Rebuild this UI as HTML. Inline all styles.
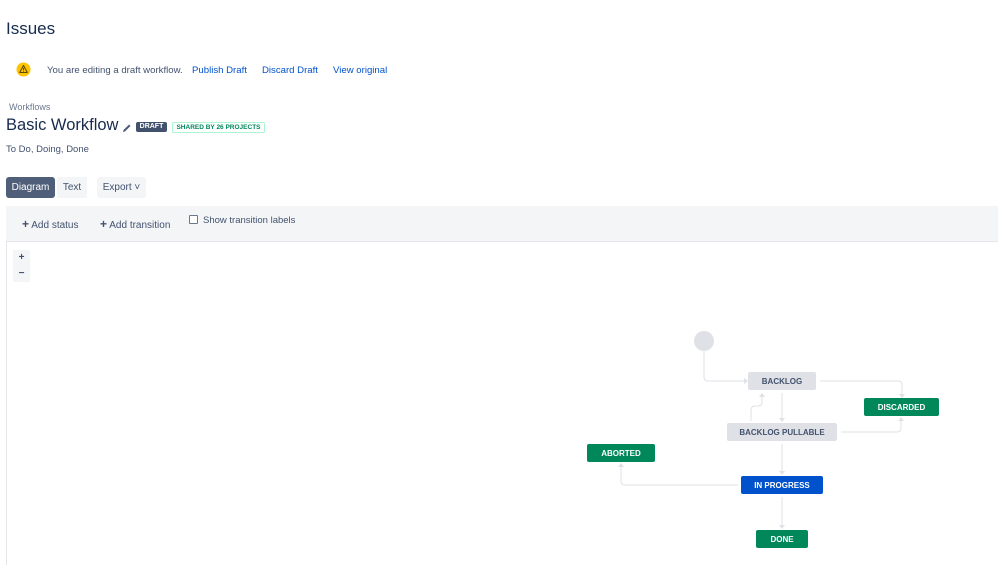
<!DOCTYPE html>
<html><head><meta charset="utf-8"><style>
*{margin:0;padding:0;box-sizing:border-box}
body{width:998px;height:565px;overflow:hidden;background:#fff;font-family:"Liberation Sans",Arial,sans-serif;color:#172b4d;position:relative}
.a{position:absolute;white-space:nowrap}
.lnk{color:#0052cc;font-size:9.6px}
.st{position:absolute;display:flex;align-items:center;justify-content:center;font-size:8px;font-weight:bold;border-radius:2px}
.g{background:#00875a;color:#fff}
.l{background:#dfe1e6;color:#42526e}
</style></head><body>
<div class="a" style="left:6px;top:19px;font-size:17px;color:#172b4d">Issues</div>
<svg class="a" style="left:16px;top:62px" width="15" height="15" viewBox="0 0 15 15"><circle cx="7.5" cy="7.5" r="7" fill="#ffc400"/><path d="M7.5 3.5 L11.3 10.5 H3.7 Z" fill="none" stroke="#5e4a00" stroke-width="1.1" stroke-linejoin="round"/><path d="M7.5 6v2.4" stroke="#5e4a00" stroke-width="1"/><circle cx="7.5" cy="9.4" r=".5" fill="#5e4a00"/></svg>
<div class="a" style="left:47px;top:65px;font-size:9.6px;color:#42526e">You are editing a draft workflow.</div>
<div class="a lnk" style="left:192px;top:65px">Publish Draft</div>
<div class="a lnk" style="left:262px;top:65px">Discard Draft</div>
<div class="a lnk" style="left:333px;top:65px">View original</div>
<div class="a" style="left:9px;top:102px;font-size:9px;color:#6b778c">Workflows</div>
<div class="a" style="left:6px;top:116px;font-size:16.5px;color:#172b4d">Basic Workflow</div>
<svg class="a" style="left:122px;top:123px" width="10" height="10" viewBox="0 0 10 10"><path d="M1 9 L1.5 7 L7 1.5 L8.5 3 L3 8.5 Z" fill="#505f79"/></svg>
<div class="a" style="left:136px;top:122px;width:31px;height:10px;background:#42526e;color:#fff;font-size:7px;font-weight:bold;border-radius:2px;line-height:10px;text-align:center">DRAFT</div>
<div class="a" style="left:172px;top:122px;width:93px;height:11px;border:1px solid #abf5d1;color:#00875a;font-size:6.5px;font-weight:bold;border-radius:2px;line-height:9px;text-align:center">SHARED BY 26 PROJECTS</div>
<div class="a" style="left:6px;top:144px;font-size:9.5px;color:#42526e">To Do, Doing, Done</div>
<div class="a" style="left:6px;top:177px;width:49px;height:21px;background:#505f79;color:#fff;font-size:10px;border-radius:3px;display:flex;align-items:center;justify-content:center">Diagram</div>
<div class="a" style="left:57px;top:177px;width:30px;height:21px;background:#f4f5f7;color:#42526e;font-size:10px;display:flex;align-items:center;justify-content:center">Text</div>
<div class="a" style="left:97px;top:177px;width:49px;height:21px;background:#f4f5f7;color:#42526e;font-size:10px;border-radius:3px;display:flex;align-items:center;justify-content:center">Export ˅</div>
<div class="a" style="left:6px;top:206px;width:992px;height:36px;background:#f4f5f7;border-bottom:1px solid #e4e6ea"></div>
<div class="a" style="left:6px;top:242px;width:1px;height:323px;background:#e4e6ea"></div>
<div class="a" style="left:22px;top:217px;font-size:10px;color:#42526e"><b style="color:#42526e;font-size:12px">+</b> Add status</div>
<div class="a" style="left:100px;top:217px;font-size:10px;color:#42526e"><b style="font-size:12px">+</b> Add transition</div>
<div class="a" style="left:189px;top:215px;width:9px;height:9px;border:1px solid #6b778c;border-radius:1px;background:#fff"></div>
<div class="a" style="left:203px;top:215px;font-size:9.5px;color:#42526e">Show transition labels</div>
<div class="a" style="left:13px;top:250px;width:17px;height:32px;background:#f4f5f7;font-size:10px;font-weight:bold;color:#42526e;text-align:center;line-height:16px">+<br>−</div>
<svg class="a" style="left:0;top:0" width="998" height="565">
<g fill="none" stroke="#dfe1e6" stroke-width="1">
<path d="M704 351 V377 Q704 381 708 381 H744"/>
<path d="M820 381 H898 Q902 381 902 385 V394"/>
<path d="M782 393 V418"/>
<path d="M751 421 V410 Q751 406 755 406 H758 Q762 406 762 402 V396"/>
<path d="M841 432 H897 Q901 432 901 428 V420"/>
<path d="M782 444 V471"/>
<path d="M738 485 H625 Q621 485 621 481 V466"/>
<path d="M782 497 V525"/>
</g>
<g fill="#dfe1e6">
<path d="M744 378 L748 381 L744 384Z"/><path d="M899 394 L902 398 L905 394Z"/>
<path d="M779 418 L782 422 L785 418Z"/><path d="M759 397 L762 393 L765 397Z"/>
<path d="M898 421 L901 417 L904 421Z"/><path d="M779 471 L782 475 L785 471Z"/>
<path d="M618 467 L621 463 L624 467Z"/><path d="M779 525 L782 529 L785 525Z"/>
</g>
<circle cx="704" cy="341" r="10" fill="#dfe1e6"/>
</svg>
<div class="st l" style="left:748px;top:372px;width:68px;height:18px">BACKLOG</div>
<div class="st g" style="left:864px;top:398px;width:75px;height:18px">DISCARDED</div>
<div class="st l" style="left:727px;top:423px;width:110px;height:18px">BACKLOG PULLABLE</div>
<div class="st g" style="left:587px;top:444px;width:68px;height:18px">ABORTED</div>
<div class="st" style="left:741px;top:476px;width:82px;height:18px;background:#0052cc;color:#fff">IN PROGRESS</div>
<div class="st g" style="left:756px;top:530px;width:52px;height:18px">DONE</div>
</body></html>
